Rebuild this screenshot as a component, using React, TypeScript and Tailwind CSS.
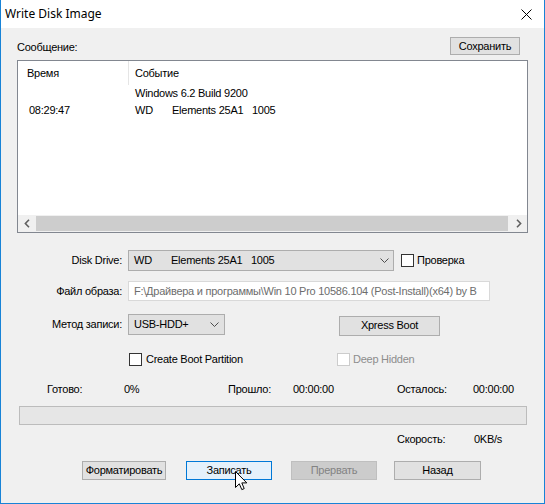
import React from "react";

const F = { fontFamily: '"Liberation Sans", Arial, sans-serif' };

function Chevron() {
  return (
    <svg width="9" height="5" viewBox="0 0 9 5" className="block">
      <path d="M0.5 0.5 L4.5 4.5 L8.5 0.5" fill="none" stroke="#4d4d4d" strokeWidth="1" />
    </svg>
  );
}

function Box({ disabled = false }: { disabled?: boolean }) {
  return (
    <div
      className={
        "w-[13px] h-[13px] shrink-0 bg-white border " +
        (disabled ? "border-[#cccccc]" : "border-[#333333]")
      }
    />
  );
}

function DriveText() {
  return (
    <div className="flex whitespace-nowrap">
      <span className="w-[37px]">WD</span>
      <span className="w-[80px]">Elements 25A1</span>
      <span>1005</span>
    </div>
  );
}

export default function App() {
  return (
    <div
      className="relative w-[545px] h-[504px] bg-[#f0f0f0] border-l border-r border-b border-[#1883d7] flex flex-col text-[11px] tracking-[-0.25px] text-black leading-none select-none"
      style={F}
    >
      {/* Title bar */}
      <div className="h-[28px] bg-white flex items-center justify-between shrink-0">
        <span
          className="pl-[4px] text-[12px] tracking-normal text-black"
          style={{ fontFamily: '"Noto Sans", "Open Sans", sans-serif' }}
        >
          Write Disk Image
        </span>
        <svg width="11" height="11" viewBox="0 0 11 11" className="mr-[12px]">
          <path d="M0.5 0.5 L10.5 10.5 M10.5 0.5 L0.5 10.5" stroke="#000" strokeWidth="1" />
        </svg>
      </div>

      <div className="flex flex-col px-[16px]">
        {/* Message header */}
        <div className="mt-[9px] h-[18px] flex items-center justify-between">
          <span className="pt-[3px]">Сообщение:</span>
          <button className="mr-[8px] w-[70px] h-[18px] bg-[#e1e1e1] border border-[#adadad] flex items-center justify-center">
            Сохранить
          </button>
        </div>

        {/* List box */}
        <div className="mt-[5px] h-[173px] bg-white border border-[#828790] flex flex-col">
          <div className="h-[24px] flex items-stretch shrink-0">
            <div className="w-[110px] flex items-center pl-[9px]">Время</div>
            <div className="w-px bg-[#e5e5e5]" />
            <div className="flex items-center pl-[6px]">Событие</div>
          </div>
          <div className="h-[17px] flex items-center">
            <div className="w-[117px]" />
            <span>Windows 6.2 Build 9200</span>
          </div>
          <div className="h-[17px] flex items-center">
            <div className="w-[117px] pl-[11px]">08:29:47</div>
            <DriveText />
          </div>
          <div className="flex-1" />
          <div className="h-[17px] flex items-stretch bg-[#f0f0f0] shrink-0">
            <div className="w-[17px] flex items-center justify-center">
              <svg width="6" height="9" viewBox="0 0 6 9">
                <path d="M5 0.8 L1.4 4.5 L5 8.2" fill="none" stroke="#606060" strokeWidth="1.6" />
              </svg>
            </div>
            <div className="flex-1 my-[1px] ml-[1px] mr-[2px] bg-[#cdcdcd]" />
            <div className="w-[17px] flex items-center justify-center">
              <svg width="6" height="9" viewBox="0 0 6 9">
                <path d="M1 0.8 L4.6 4.5 L1 8.2" fill="none" stroke="#606060" strokeWidth="1.6" />
              </svg>
            </div>
          </div>
        </div>

        {/* Disk Drive */}
        <div className="mt-[17px] h-[21px] flex items-center">
          <span className="w-[105px] text-right mr-[6px]">Disk Drive:</span>
          <div className="w-[266px] h-[21px] bg-[#e1e1e1] border border-[#adadad] flex items-center justify-between pl-[5px] pr-[4px]">
            <DriveText />
            <Chevron />
          </div>
          <div className="ml-[7px] flex items-center">
            <Box />
            <span className="ml-[3px]">Проверка</span>
          </div>
        </div>

        {/* Image file */}
        <div className="mt-[10px] h-[20px] flex items-center">
          <span className="w-[105px] text-right mr-[6px]">Файл образа:</span>
          <div className="w-[362px] h-[20px] bg-white border border-[#d9d9d9] flex items-center pl-[5px] overflow-hidden whitespace-nowrap text-[#6d6d6d]">
            F:\Драйвера и программы\Win 10 Pro 10586.104 (Post-Install)(x64) by B
          </div>
        </div>

        {/* Write method */}
        <div className="mt-[13px] h-[21px] flex items-center">
          <span className="w-[105px] text-right mr-[6px]">Метод записи:</span>
          <div className="w-[97px] h-[21px] bg-[#e1e1e1] border border-[#adadad] flex items-center justify-between pl-[5px] pr-[5px]">
            <span>USB-HDD+</span>
            <Chevron />
          </div>
          <button className="ml-[114px] mt-[2px] w-[101px] h-[20px] bg-[#e1e1e1] border border-[#adadad] flex items-center justify-center">
            Xpress Boot
          </button>
        </div>

        {/* Checkboxes */}
        <div className="mt-[18px] h-[13px] flex items-center">
          <div className="ml-[112px] w-[208px] flex items-center">
            <Box />
            <span className="ml-[4px]">Create Boot Partition</span>
          </div>
          <div className="flex items-center">
            <Box disabled />
            <span className="ml-[3px] text-[#8d8d8d]">Deep Hidden</span>
          </div>
        </div>

        {/* Stats */}
        <div className="mt-[16px] h-[14px] flex items-center whitespace-nowrap">
          <span className="ml-[30px] w-[77px]">Готово:</span>
          <span className="w-[104px]">0%</span>
          <span className="w-[65px]">Прошло:</span>
          <span className="w-[104px]">00:00:00</span>
          <span className="w-[76px]">Осталось:</span>
          <span>00:00:00</span>
        </div>

        {/* Progress */}
        <div className="mt-[10px] ml-[2px] mr-[1px] h-[19px] bg-[#e6e6e6] border border-[#bcbcbc]" />

        {/* Speed */}
        <div className="mt-[7px] h-[14px] flex items-center whitespace-nowrap">
          <span className="ml-[380px] w-[77px]">Скорость:</span>
          <span>0KB/s</span>
        </div>

        {/* Buttons */}
        <div className="mt-[15px] h-[19px] flex items-center">
          <button className="ml-[65px] w-[84px] h-[19px] bg-[#e1e1e1] border border-[#adadad] flex items-center justify-center">
            Форматировать
          </button>
          <button className="ml-[20px] w-[86px] h-[19px] bg-[#e5f1fb] border border-[#0078d7] flex items-center justify-center">
            Записать
          </button>
          <button className="ml-[19px] w-[86px] h-[19px] bg-[#cccccc] border border-[#bfbfbf] text-[#838383] flex items-center justify-center">
            Прервать
          </button>
          <button className="ml-[17px] w-[87px] h-[19px] bg-[#e1e1e1] border border-[#adadad] flex items-center justify-center">
            Назад
          </button>
        </div>
      </div>

      {/* Mouse cursor */}
      <svg
        width="13"
        height="20"
        viewBox="0 0 13 20"
        className="absolute left-[234px] top-[471px]"
      >
        <path
          d="M0.5 0.5 L0.5 16.5 L4.3 12.8 L6.8 18.6 L9.2 17.6 L6.8 11.9 L11.8 11.9 Z"
          fill="#fff"
          stroke="#000"
          strokeWidth="1"
          strokeLinejoin="miter"
        />
      </svg>
    </div>
  );
}
